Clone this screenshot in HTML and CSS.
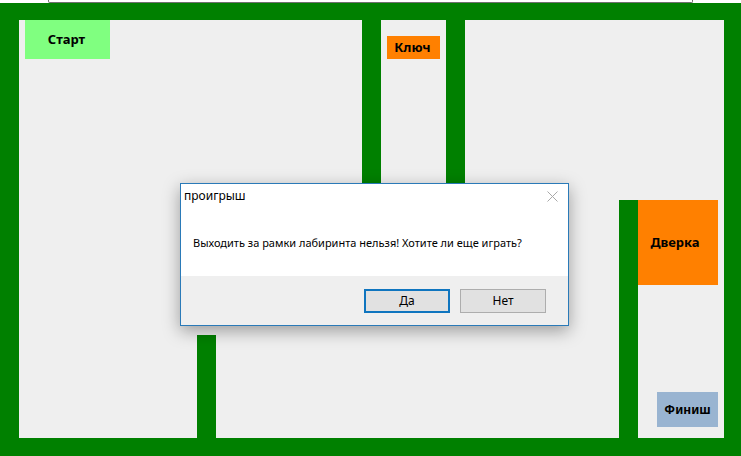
FILE: index.html
```html
<!DOCTYPE html>
<html lang="ru">
<head>
<meta charset="utf-8">
<title>Лабиринт</title>
<link rel="stylesheet" href="styles.css">
</head>
<body>
<div class="window-edge"><div class="window-edge-frame"></div></div>
<main class="maze">
  <div class="wall wall-low"></div>
  <div class="wall wall-key-left"></div>
  <div class="wall wall-key-right"></div>
  <div class="wall wall-door"></div>
  <div class="tile start">Старт</div>
  <div class="tile key">Ключ</div>
  <div class="tile door">Дверка</div>
  <div class="tile finish">Финиш</div>
</main>
<section class="dialog" role="dialog" aria-labelledby="dialog-title" aria-describedby="dialog-text">
  <header class="dialog-bar">
    <h1 class="dialog-title" id="dialog-title">проигрыш</h1>
    <button class="close" type="button" aria-label="Закрыть">
      <svg width="11" height="11" viewBox="0 0 11 11"><path d="M.5 .5l10 10M10.500 .5l-10 10" fill="none" stroke="#a9a9a9" stroke-width="1"/></svg>
    </button>
  </header>
  <p class="dialog-text" id="dialog-text">Выходить за рамки лабиринта нельзя! Хотите ли еще играть?</p>
  <footer class="dialog-actions">
    <button class="button button-default" type="button">Да</button>
    <button class="button" type="button">Нет</button>
  </footer>
</section>
</body>
</html>
```
FILE: styles.css
```css
* {
  box-sizing: border-box;
}

body {
  margin: 0;
  min-height: 100vh;
  display: flex;
  flex-direction: column;
  background: #fff;
  color: #000;
  font-family: "Noto Sans", sans-serif;
  font-size: 12px;
  line-height: 16px;
}

.window-edge {
  height: 3px;
  padding: 0 48px;
}

.window-edge-frame {
  height: 3px;
  border: 1px solid #707070;
  border-top: 0;
  border-radius: 0 0 2px 2px;
  background: #fff;
}

.maze {
  flex: 1;
  display: grid;
  grid-template-columns: 178fr 19px 146fr 19px 65px 19px 154fr 19px 86px;
  grid-template-rows: 180px 1fr 103px;
  border: solid #008000;
  border-width: 17px 17px 18px 19px;
  background: #efefef;
}

.wall {
  background: #008000;
}

.wall-low {
  grid-area: 3 / 2;
}

.wall-key-left {
  grid-area: 1 / 4;
}

.wall-key-right {
  grid-area: 1 / 6;
}

.wall-door {
  grid-area: 2 / 8 / 4 / 9;
}

.tile {
  display: flex;
  align-items: center;
  justify-content: center;
  padding: 0 2px 2px 0;
  font-size: 13px;
  font-weight: 700;
}

.start {
  grid-area: 1 / 1;
  width: 85px;
  height: 39px;
  margin-left: 6px;
  background: #80ff80;
}

.key {
  grid-area: 1 / 5;
  height: 23px;
  margin: 16px 6px 0;
  background: #ff8000;
}

.door {
  grid-area: 2 / 9;
  height: 85px;
  margin-right: 6px;
  padding-right: 6px;
  background: #ff8000;
}

.finish {
  grid-area: 3 / 9;
  align-self: end;
  justify-self: end;
  width: 61px;
  height: 35px;
  margin: 0 6px 11px 0;
  padding: 0;
  background: #99b4d1;
  font-size: 12px;
}

.dialog {
  position: absolute;
  top: 183px;
  left: 180px;
  width: 389px;
  border: 1px solid #2a7ab8;
  background: #fff;
  box-shadow: 0 5px 16px rgba(0, 0, 0, 0.35);
}

.dialog-bar {
  display: flex;
  align-items: center;
  justify-content: space-between;
  height: 24px;
  padding: 0 10px 0 3px;
}

.dialog-title {
  margin: 0;
  font-size: 12px;
  font-weight: 400;
}

.close {
  display: flex;
  padding: 0;
  border: 0;
  background: none;
}

.dialog-text {
  margin: 0;
  padding: 27px 12px 25px;
  font-size: 11px;
}

.dialog-actions {
  display: flex;
  justify-content: flex-end;
  gap: 10px;
  padding: 13px 22px 12px;
  background: #efefef;
}

.button {
  width: 86px;
  height: 24px;
  padding: 0;
  border: 1px solid #adadad;
  background: #e1e1e1;
  color: #000;
  font: inherit;
}

.button-default {
  border: 2px solid #0f75bf;
}
```
